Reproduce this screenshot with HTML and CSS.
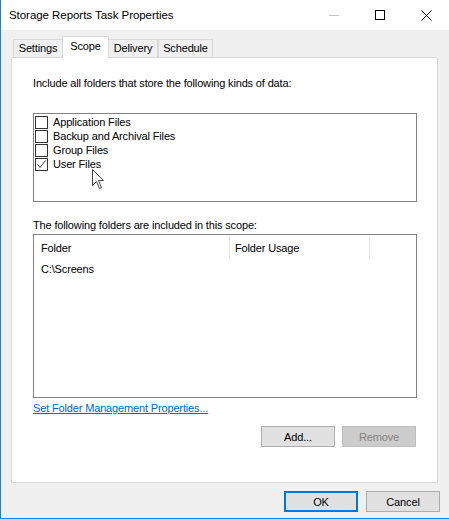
FILE: index.html
```html
<!DOCTYPE html>
<html>
<head>
<meta charset="utf-8">
<title>Storage Reports Task Properties</title>
<link rel="stylesheet" href="styles.css">
</head>
<body>
<div class="window">
  <div class="titlebar">
    <span class="title">Storage Reports Task Properties</span>
    <div class="caption-buttons">
      <span class="cap cap-min"><svg width="10" height="10" viewBox="0 0 10 10"><line x1="0" y1="5.5" x2="10" y2="5.5" stroke="#c4c4c4" stroke-width="1"/></svg></span>
      <span class="cap"><svg width="10" height="10" viewBox="0 0 10 10"><rect x="0.5" y="0.5" width="9" height="9" fill="none" stroke="#000" stroke-width="1"/></svg></span>
      <span class="cap"><svg width="11" height="11" viewBox="0 0 11 11"><path d="M0.5 0.5 L10.5 10.5 M10.5 0.5 L0.5 10.5" stroke="#000" stroke-width="1"/></svg></span>
    </div>
  </div>
  <div class="content">
    <div class="tabs">
      <div class="tab tab-settings">Settings</div>
      <div class="tab tab-scope active">Scope</div>
      <div class="tab tab-delivery">Delivery</div>
      <div class="tab tab-schedule">Schedule</div>
    </div>
    <div class="panel">
      <p class="label label-first">Include all folders that store the following kinds of data:</p>
      <div class="checklist">
        <div class="check-row"><span class="box"></span><span>Application Files</span></div>
        <div class="check-row"><span class="box"></span><span>Backup and Archival Files</span></div>
        <div class="check-row"><span class="box"></span><span>Group Files</span></div>
        <div class="check-row"><span class="box checked"><svg width="11" height="11" viewBox="0 0 11 11"><path d="M1.5 5.5 L4 8.5 L9.5 1.5" fill="none" stroke="#333" stroke-width="1"/></svg></span><span>User Files</span></div>
      </div>
      <p class="label label-second">The following folders are included in this scope:</p>
      <div class="listview">
        <div class="lv-header">
          <div class="lv-col col-folder">Folder</div>
          <div class="lv-col col-usage">Folder Usage</div>
          <div class="lv-col col-rest"></div>
        </div>
        <div class="lv-row">C:\Screens</div>
      </div>
      <a class="link" href="#">Set Folder Management Properties...</a>
      <div class="btn-row">
        <button class="btn">Add...</button>
        <button class="btn" disabled>Remove</button>
      </div>
    </div>
    <div class="dialog-buttons">
      <button class="btn btn-default">OK</button>
      <button class="btn">Cancel</button>
    </div>
  </div>
  <svg class="cursor" width="13" height="20" viewBox="0 0 13 20"><path d="M0.5 0.5 L0.5 16.5 L4.5 12.5 L7.5 19.5 L9.5 18.5 L6.5 11.5 L11.5 11.5 Z" fill="#fff" stroke="#444" stroke-width="1" stroke-linejoin="round"/></svg>
</div>
</body>
</html>
```
FILE: styles.css
```css
* { box-sizing: border-box; }
html, body { margin: 0; padding: 0; }
body {
  font-family: "Liberation Sans", Arial, sans-serif;
  font-size: 11px;
  letter-spacing: -0.15px;
  color: #000;
  background: #f0f0f0;
}
.window {
  position: relative;
  width: 449px;
  height: 519px;
  overflow: hidden;
  background: #f0f0f0;
  border-left: 1px solid #1883d7;
  border-bottom: 1px solid #1883d7;
  display: flex;
  flex-direction: column;
}
.titlebar {
  height: 30px;
  background: #fff;
  display: flex;
  align-items: center;
  padding-left: 8px;
  flex: none;
}
.title { flex: 1; font-size: 11.5px; letter-spacing: -0.05px; }
.caption-buttons { display: flex; height: 30px; }
.cap {
  width: 46px;
  height: 30px;
  display: flex;
  align-items: center;
  justify-content: center;
}
.content {
  flex: 1;
  display: flex;
  flex-direction: column;
  padding-top: 6px;
}
.tabs {
  display: flex;
  align-items: flex-end;
  height: 21px;
  margin-left: 12px;
  flex: none;
}
.tab {
  height: 18px;
  border: 1px solid #d9d9d9;
  border-bottom: none;
  background: #f0f0f0;
  display: flex;
  align-items: center;
  justify-content: center;
  padding-bottom: 1px;
}
.tab-settings { width: 49px; border-right: none; }
.tab-scope { width: 47px; }
.tab-delivery { width: 49px; border-left: none; }
.tab-schedule { width: 55px; }
.tab.active {
  height: 22px;
  margin-bottom: -1px;
  background: #fff;
  position: relative;
  z-index: 1;
  padding-bottom: 4px;
}
.panel {
  margin-left: 10px;
  width: 427px;
  height: 426px;
  flex: none;
  background: #fff;
  border: 1px solid #d9d9d9;
  padding: 0 20px 0 21px;
  display: flex;
  flex-direction: column;
}
.label { margin: 0; line-height: 15px; }
.label-first { margin-top: 18px; }
.label-second { margin-top: 16px; }
.checklist {
  margin-top: 22px;
  height: 89px;
  border: 1px solid #828282;
  padding: 1px 1px;
  flex: none;
}
.check-row {
  height: 14px;
  display: flex;
  align-items: center;
  gap: 5px;
  line-height: 14px;
}
.box {
  width: 13px;
  height: 13px;
  border: 1px solid #333;
  background: #fff;
  flex: none;
  display: flex;
  align-items: center;
  justify-content: center;
}
.listview {
  margin-top: 1px;
  height: 164px;
  border: 1px solid #828282;
  flex: none;
}
.lv-header {
  display: flex;
  height: 25px;
}
.lv-col {
  padding-left: 7px;
  border-right: 1px solid #e5e5e5;
  margin-top: 2px;
  height: 22px;
  line-height: 22px;
}
.col-folder { width: 196px; }
.col-usage { width: 140px; padding-left: 5px; }
.col-rest { border-right: none; flex: 1; }
.lv-row {
  padding-left: 7px;
  line-height: 17px;
  margin-top: 1px;
}
.link {
  margin-top: 3px;
  line-height: 15px;
  color: #0066cc;
  text-decoration: underline;
  align-self: flex-start;
}
.btn-row {
  display: flex;
  justify-content: flex-end;
  gap: 7px;
  margin-top: 10px;
  margin-right: 1px;
}
.btn {
  width: 74px;
  height: 21px;
  background: #e1e1e1;
  border: 1px solid #adadad;
  font-family: inherit;
  font-size: 11px;
  letter-spacing: -0.15px;
  color: #000;
  padding: 0;
  margin: 0;
}
.btn:disabled {
  background: #cccccc;
  border-color: #bfbfbf;
  color: #838383;
}
.dialog-buttons {
  display: flex;
  justify-content: flex-end;
  gap: 8px;
  margin-top: 8px;
  margin-right: 9px;
}
.btn-default { border: 2px solid #0078d7; }
.cursor {
  position: absolute;
  left: 91px;
  top: 169px;
}
```
